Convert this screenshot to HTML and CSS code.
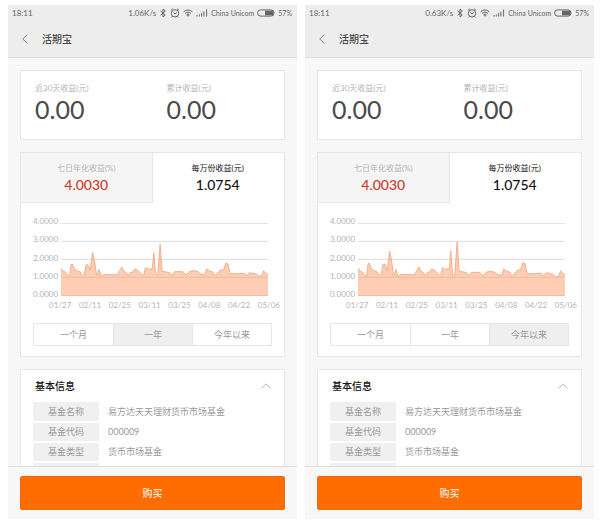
FILE: index.html
```html
<!DOCTYPE html>
<html lang="zh-CN">
<head>
  <meta charset="UTF-8">
  <meta name="viewport" content="width=device-width, initial-scale=1.0">
  <title>活期宝</title>
  <link rel="stylesheet" href="styles.css">
</head>
<body>

<!-- 图标 -->
<svg class="icon-defs" aria-hidden="true">
  <symbol id="bluetooth" viewBox="0 0 8 10">
    <path d="M1.5 2.8 6.3 7 4 9V1l2.3 2L1.5 7.2" />
  </symbol>
  <symbol id="alarm" viewBox="0 0 10 10">
    <circle cx="5" cy="5.3" r="3.7" />
    <path d="M1 2.3 2.8.8M9 2.3 7.2.8M3.4 4.6 5 6l1.8-1.4M2.4 8.4l-.8 1M7.6 8.4l.8 1" />
  </symbol>
  <symbol id="wifi" viewBox="0 0 10 8">
    <path d="M.6 2.8Q5-.8 9.4 2.8M2 4.3Q5 2 8 4.3M3.4 5.8Q5 4.6 6.6 5.8" />
    <path class="solid" d="M3.8 6.2h2.4L5 7.8z" />
  </symbol>
  <symbol id="signal" viewBox="0 0 12 8">
    <path d="M1 6v1.5M3.3 5.5v2M5.6 4v3.5M7.9 2.5v5M10.6.5v7" />
  </symbol>
  <symbol id="battery" viewBox="0 0 18 8">
    <rect x=".6" y=".9" width="16.4" height="6.2" rx="3" />
    <path class="solid" d="M8 1.8h7.4q1 0 1 1v2.4q0 1-1 1H8z" />
  </symbol>
  <symbol id="back" viewBox="0 0 6 10">
    <path d="M5.4.5.8 5l4.6 4.5" />
  </symbol>
  <symbol id="up" viewBox="0 0 10 6">
    <path d="M.5 5.4 5 .8l4.5 4.6" />
  </symbol>
</svg>

<!-- 一年 -->
<main class="phone">
  <header class="top">
    <div class="status">
      <span class="clock">18:11</span>
      <span>1.06K/s</span>
      <svg class="icon" width="8" height="10"><use href="#bluetooth" /></svg>
      <svg class="icon" width="10" height="10"><use href="#alarm" /></svg>
      <svg class="icon" width="10" height="8"><use href="#wifi" /></svg>
      <svg class="icon" width="12" height="8"><use href="#signal" /></svg>
      <span class="small">China Unicom</span>
      <svg class="icon" width="18" height="8"><use href="#battery" /></svg>
      <span class="small">57%</span>
    </div>
    <nav class="title-bar">
      <a href="#" class="back-link" aria-label="返回"><svg class="icon" width="6" height="10"><use href="#back" /></svg></a>
      <h1>活期宝</h1>
    </nav>
  </header>

  <div class="content">
    <section class="card earnings">
      <div>
        <p class="label">近30天收益(元)</p>
        <p class="amount">0.00</p>
      </div>
      <div>
        <p class="label">累计收益(元)</p>
        <p class="amount">0.00</p>
      </div>
    </section>

    <section class="card">
      <div class="tabs">
        <button type="button" class="tab"><span>七日年化收益(%)</span><strong>4.0030</strong></button>
        <button type="button" class="tab active"><span>每万份收益(元)</span><strong>1.0754</strong></button>
      </div>
      <div class="chart">
        <div class="y-axis">
          <span>4.0000</span><span>3.0000</span><span>2.0000</span><span>1.0000</span><span>0.0000</span>
        </div>
        <svg class="plot" viewBox="0 0 622 219" preserveAspectRatio="none">
          <path class="grid" d="M0 1H622M0 55H622M0 109H622M0 163H622M0 218H622" />
          <path class="area" d="M0 219V135L6 145 12 146 20 157 26 159 30 125 34 123 40 137 50 144 58 147 64 157 70 156 75 126 81 125 88 141 95 88 100 110 107 157 110 157 114 139 120 157 124 159 127 155H170L176 143 183 132 190 145 198 151 203 158 209 148 216 147 222 138 230 141 238 149 244 157 249 155 254 134 260 138H273L275 133 279 89 284 153 291 156 298 64 304 145 318 147 326 149 333 157 342 146H366L376 156 386 145 400 143 412 146 418 153 432 156 438 138 446 144 456 147 463 158 472 148 482 139 488 143 496 120 502 123 508 152H528L550 151 558 158 566 149 576 151 588 153 594 159H603L609 143 615 151 622 154V219Z" />
          <path class="line" d="M0 135 6 145 12 146 20 157 26 159 30 125 34 123 40 137 50 144 58 147 64 157 70 156 75 126 81 125 88 141 95 88 100 110 107 157 110 157 114 139 120 157 124 159 127 155H170L176 143 183 132 190 145 198 151 203 158 209 148 216 147 222 138 230 141 238 149 244 157 249 155 254 134 260 138H273L275 133 279 89 284 153 291 156 298 64 304 145 318 147 326 149 333 157 342 146H366L376 156 386 145 400 143 412 146 418 153 432 156 438 138 446 144 456 147 463 158 472 148 482 139 488 143 496 120 502 123 508 152H528L550 151 558 158 566 149 576 151 588 153 594 159H603L609 143 615 151 622 154" />
        </svg>
        <div class="x-axis">
          <span>01/27</span><span>02/11</span><span>02/25</span><span>03/11</span><span>03/25</span><span>04/08</span><span>04/22</span><span>05/06</span>
        </div>
      </div>
      <div class="ranges">
        <button type="button">一个月</button>
        <button type="button" class="active">一年</button>
        <button type="button">今年以来</button>
      </div>
    </section>

    <section class="card info">
      <div class="info-header">
        <h2>基本信息</h2>
        <svg class="icon" width="10" height="6"><use href="#up" /></svg>
      </div>
      <table>
        <tr><th scope="row">基金名称</th><td>易方达天天理财货币市场基金</td></tr>
        <tr><th scope="row">基金代码</th><td>000009</td></tr>
        <tr><th scope="row">基金类型</th><td>货币市场基金</td></tr>
        <tr><th scope="row"></th><td></td></tr>
      </table>
    </section>
  </div>

  <footer class="buy-bar">
    <button type="button" class="buy">购买</button>
  </footer>
</main>

<!-- 今年以来 -->
<main class="phone">
  <header class="top">
    <div class="status">
      <span class="clock">18:11</span>
      <span>0.63K/s</span>
      <svg class="icon" width="8" height="10"><use href="#bluetooth" /></svg>
      <svg class="icon" width="10" height="10"><use href="#alarm" /></svg>
      <svg class="icon" width="10" height="8"><use href="#wifi" /></svg>
      <svg class="icon" width="12" height="8"><use href="#signal" /></svg>
      <span class="small">China Unicom</span>
      <svg class="icon" width="18" height="8"><use href="#battery" /></svg>
      <span class="small">57%</span>
    </div>
    <nav class="title-bar">
      <a href="#" class="back-link" aria-label="返回"><svg class="icon" width="6" height="10"><use href="#back" /></svg></a>
      <h1>活期宝</h1>
    </nav>
  </header>

  <div class="content">
    <section class="card earnings">
      <div>
        <p class="label">近30天收益(元)</p>
        <p class="amount">0.00</p>
      </div>
      <div>
        <p class="label">累计收益(元)</p>
        <p class="amount">0.00</p>
      </div>
    </section>

    <section class="card">
      <div class="tabs">
        <button type="button" class="tab"><span>七日年化收益(%)</span><strong>4.0030</strong></button>
        <button type="button" class="tab active"><span>每万份收益(元)</span><strong>1.0754</strong></button>
      </div>
      <div class="chart">
        <div class="y-axis">
          <span>4.0000</span><span>3.0000</span><span>2.0000</span><span>1.0000</span><span>0.0000</span>
        </div>
        <svg class="plot" viewBox="0 0 622 219" preserveAspectRatio="none">
          <path class="grid" d="M0 1H622M0 55H622M0 109H622M0 163H622M0 218H622" />
          <path class="area" d="M0 219V135L6 145 12 146 20 157 26 159 30 123 34 120 40 137 50 144 58 147 64 157 70 156 75 124 81 123 88 143 95 84 100 108 107 157 110 157 114 139 120 160 124 157 127 155H170L176 143 183 132 190 145 198 151 203 158 209 148 216 147 222 138 230 141 238 149 244 157 249 155 254 134 260 138H273L275 133 279 84 284 155 291 158 298 57 304 145 318 147 326 149 333 157 342 148H366L376 158 386 147 400 145 412 148 418 154 432 157 438 138 446 144 456 147 463 160 472 150 482 139 488 143 496 119 502 122 508 152H528L550 151 558 158 566 149 576 151 588 155 594 161H603L609 143 615 151 622 154V219Z" />
          <path class="line" d="M0 135 6 145 12 146 20 157 26 159 30 123 34 120 40 137 50 144 58 147 64 157 70 156 75 124 81 123 88 143 95 84 100 108 107 157 110 157 114 139 120 160 124 157 127 155H170L176 143 183 132 190 145 198 151 203 158 209 148 216 147 222 138 230 141 238 149 244 157 249 155 254 134 260 138H273L275 133 279 84 284 155 291 158 298 57 304 145 318 147 326 149 333 157 342 148H366L376 158 386 147 400 145 412 148 418 154 432 157 438 138 446 144 456 147 463 160 472 150 482 139 488 143 496 119 502 122 508 152H528L550 151 558 158 566 149 576 151 588 155 594 161H603L609 143 615 151 622 154" />
        </svg>
        <div class="x-axis">
          <span>01/27</span><span>02/11</span><span>02/25</span><span>03/11</span><span>03/25</span><span>04/08</span><span>04/22</span><span>05/06</span>
        </div>
      </div>
      <div class="ranges">
        <button type="button">一个月</button>
        <button type="button">一年</button>
        <button type="button" class="active">今年以来</button>
      </div>
    </section>

    <section class="card info">
      <div class="info-header">
        <h2>基本信息</h2>
        <svg class="icon" width="10" height="6"><use href="#up" /></svg>
      </div>
      <table>
        <tr><th scope="row">基金名称</th><td>易方达天天理财货币市场基金</td></tr>
        <tr><th scope="row">基金代码</th><td>000009</td></tr>
        <tr><th scope="row">基金类型</th><td>货币市场基金</td></tr>
        <tr><th scope="row"></th><td></td></tr>
      </table>
    </section>
  </div>

  <footer class="buy-bar">
    <button type="button" class="buy">购买</button>
  </footer>
</main>

</body>
</html>
```
FILE: styles.css
```css
:root {
  --page-bg: #fefefe;
  --phone-bg: #f7f7f7;
  --bar-bg: #ededed;
  --border: #e6e6e6;
  --accent: #ff6c00;
  --red: #cf3a2c;
  --text: #111111;
  --text-dark: #4a4a4a;
  --text-muted: #999999;
  --text-light: #b4b4b4;
}

* {
  margin: 0;
  padding: 0;
  box-sizing: border-box;
}

body {
  display: flex;
  gap: 8px;
  height: 100vh;
  padding: 5px 6px 6px 8px;
  background: var(--page-bg);
  color: var(--text);
  font-family: Lato, "Noto Sans CJK SC", sans-serif;
  font-size: 9px;
  line-height: 12px;
}

button {
  font: inherit;
  border: none;
  cursor: pointer;
}

.icon-defs {
  position: absolute;
  width: 0;
  height: 0;
}

.icon {
  display: block;
  flex: none;
  fill: none;
  stroke: currentColor;
  stroke-width: 1;
}

.solid {
  fill: currentColor;
  stroke: none;
}

.phone {
  flex: 1;
  min-width: 0;
  display: flex;
  flex-direction: column;
  background: var(--phone-bg);
}

/* 顶部 */
.top {
  background: var(--bar-bg);
  border-bottom: 1px solid #dedede;
}

.status {
  display: flex;
  align-items: center;
  gap: 3px;
  height: 16px;
  padding: 0 5px 0 4px;
  color: #666666;
  font-size: 8px;
  white-space: nowrap;
}

.small {
  font-size: 7px;
}

.clock {
  margin-right: auto;
}

.title-bar {
  display: flex;
  align-items: center;
  gap: 14px;
  height: 36px;
  padding-left: 14px;
}

.back-link {
  color: #888888;
}

.title-bar h1 {
  color: var(--text-dark);
  font-size: 10px;
  font-weight: 500;
}

/* 内容 */
.content {
  flex: 1;
  min-height: 0;
  overflow: hidden;
  display: flex;
  flex-direction: column;
  gap: 12px;
  padding: 12px 12px 0;
}

.card {
  flex: none;
  background: #ffffff;
  border: 1px solid var(--border);
}

.earnings {
  display: grid;
  grid-template-columns: 1fr 1fr;
  padding: 11px 0 15px;
}

.earnings > div {
  padding-left: 14px;
}

.label {
  color: var(--text-light);
  font-size: 8px;
}

.amount {
  color: var(--text-dark);
  font-size: 25px;
  line-height: 30px;
}

.tabs {
  display: grid;
  grid-template-columns: 1fr 1fr;
}

.tab {
  display: flex;
  flex-direction: column;
  align-items: center;
  padding: 9px 0 8px;
  background: #f5f5f5;
  border-right: 1px solid var(--border);
  border-bottom: 1px solid var(--border);
  color: var(--text-light);
  font-size: 8px;
}

.tab strong {
  margin-top: 2px;
  color: var(--red);
  font-size: 14px;
  font-weight: 500;
  line-height: 18px;
}

.tab.active {
  background: #ffffff;
  border-color: transparent;
  color: var(--text);
}

.tab.active strong {
  color: var(--text);
}

/* 走势图 */
.chart {
  display: grid;
  grid-template-columns: auto 1fr;
  column-gap: 3px;
  padding: 20px 16px 0 12px;
  color: var(--text-light);
  font-size: 8px;
}

.y-axis {
  display: flex;
  flex-direction: column;
  justify-content: space-between;
  margin: -8px 0 -4px;
}

.plot {
  width: 100%;
  height: 73px;
}

.plot path {
  fill: none;
  stroke-width: 1;
  stroke-linejoin: round;
  vector-effect: non-scaling-stroke;
}

.plot .grid {
  stroke: #dddddd;
}

.plot .area {
  fill: #ff9b6a;
  fill-opacity: 0.5;
}

.plot .line {
  stroke: #f0b08c;
}

.x-axis {
  grid-column: 2;
  display: flex;
  justify-content: space-between;
  margin: 3px -12px 0;
}

.ranges {
  display: grid;
  grid-template-columns: repeat(3, 1fr);
  margin: 12px 12px 10px;
  border: 1px solid var(--border);
}

.ranges button {
  height: 21px;
  background: #ffffff;
  color: var(--text-muted);
}

.ranges button + button {
  border-left: 1px solid var(--border);
}

.ranges button.active {
  background: #efefef;
}

/* 基本信息 */
.info {
  padding: 0 12px 12px;
}

.info-header {
  display: flex;
  align-items: center;
  justify-content: space-between;
  height: 32px;
  padding: 0 1px 0 2px;
  color: var(--text-light);
}

.info-header h2 {
  color: var(--text);
  font-size: 10px;
  font-weight: 500;
}

.info table {
  width: 100%;
  border-collapse: collapse;
}

.info th,
.info td {
  height: 20px;
  border-bottom: 2px solid #ffffff;
  color: var(--text-muted);
  font-weight: normal;
}

.info th {
  width: 66px;
  background: #f0f0f0;
  background-clip: padding-box;
}

.info td {
  padding-left: 9px;
}

.buy-bar {
  padding: 9px 12px;
  border-top: 1px solid #dedede;
}

.buy {
  display: block;
  width: 100%;
  height: 34px;
  background: var(--accent);
  border: 1px solid #ee6a10;
  border-radius: 2px;
  color: #ffffff;
  font-size: 10px;
}
```
